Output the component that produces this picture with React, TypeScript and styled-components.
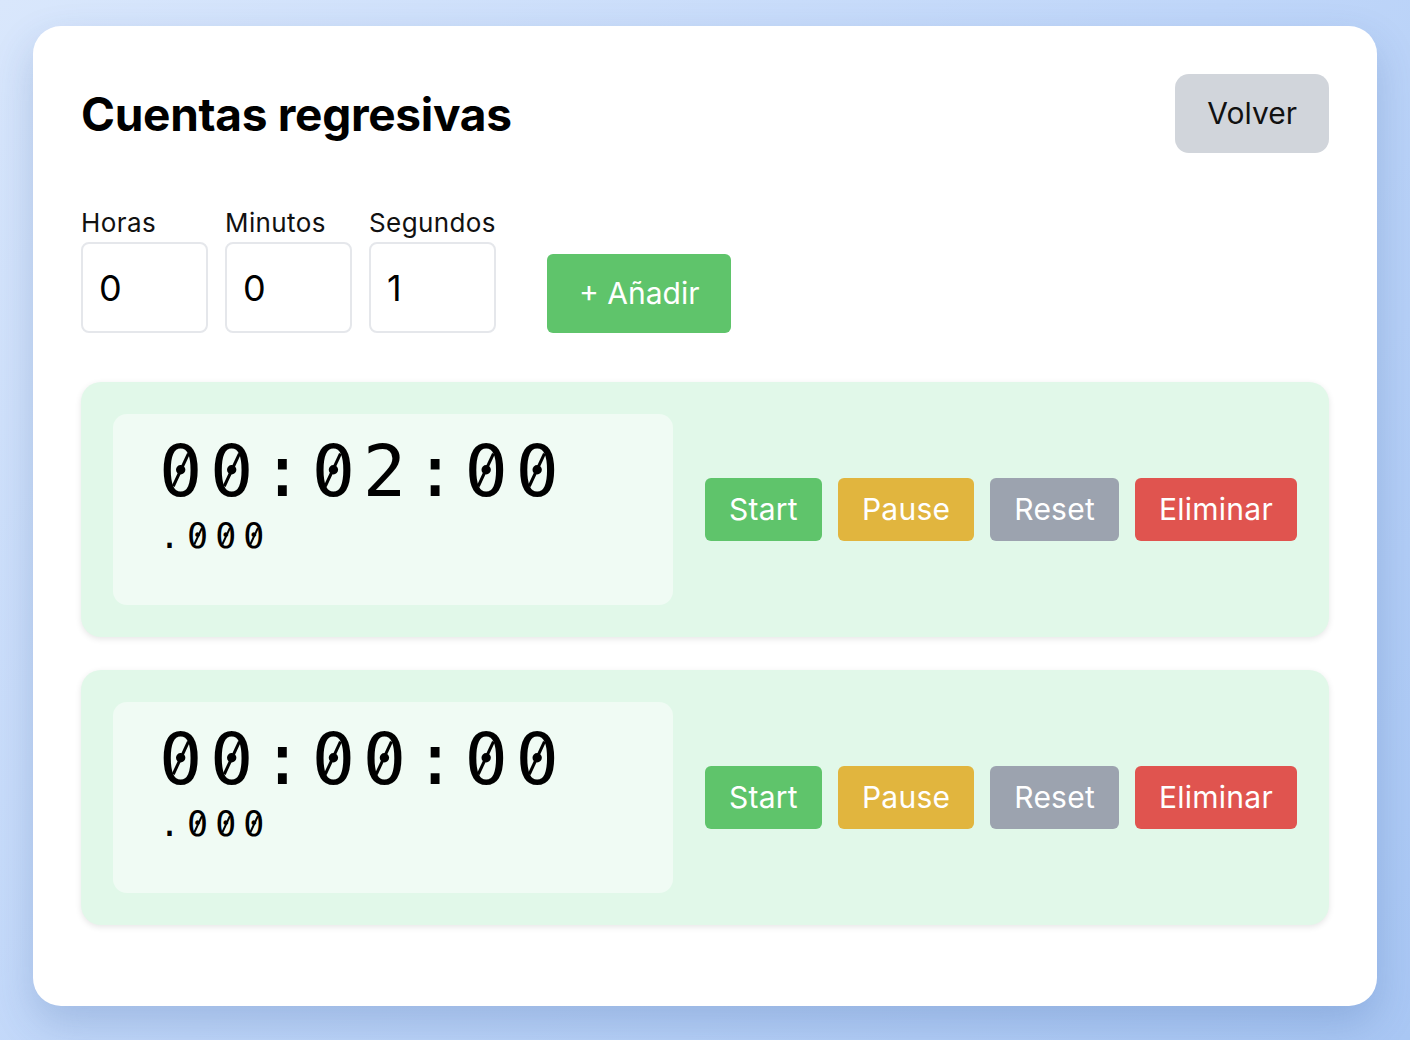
import React, { useState } from "react";
import styled, { createGlobalStyle } from "styled-components";

const GlobalStyle = createGlobalStyle`
  html, body { margin: 0; padding: 0; }
  body {
    font-family: Inter, "Noto Sans", "Liberation Sans", sans-serif;
    background: linear-gradient(135deg, #d9e7fc 0%, #bfd6f9 50%, #a9c7f4 100%);
    min-height: 100vh;
  }
  * { box-sizing: border-box; }
`;

const Page = styled.div`
  min-height: 100vh;
  padding: 26px 33px;
`;

const Card = styled.div`
  background: #ffffff;
  border-radius: 28px;
  padding: 48px 48px 81px;
  box-shadow: 0 18px 40px rgba(40, 80, 150, 0.22);
`;

const Header = styled.div`
  display: flex;
  justify-content: space-between;
  align-items: center;
`;

const Title = styled.h1`
  margin: 0;
  font-size: 46px;
  font-weight: 700;
  letter-spacing: -0.3px;
  color: #000;
`;

const Button = styled.button<{ $bg: string; $fg?: string; $big?: boolean; $radius?: number }>`
  border: none;
  cursor: pointer;
  font-family: Inter, "Noto Sans", "Liberation Sans", sans-serif;
  font-size: 30px;
  line-height: 39px;
  letter-spacing: ${(p) => (p.$big ? "0" : "0.25px")};
  padding: ${(p) => (p.$big ? "20px 32px" : "12px 24px")};
  border-radius: ${(p) => p.$radius ?? 6}px;
  background: ${(p) => p.$bg};
  color: ${(p) => p.$fg ?? "#ffffff"};
  white-space: nowrap;
`;

const Form = styled.div`
  display: flex;
  align-items: flex-end;
  gap: 17px;
  margin-top: 52px;
`;

const Field = styled.label`
  display: flex;
  flex-direction: column;
  width: 127px;
`;

const LabelText = styled.span`
  font-size: 26px;
  line-height: 35px;
  letter-spacing: 0.4px;
  margin-bottom: 2px;
  color: #111;
  white-space: nowrap;
`;

const NumberInput = styled.input`
  width: 127px;
  height: 91px;
  border: 2px solid #e5e7eb;
  border-radius: 8px;
  padding: 0 16px;
  font-family: Inter, "Noto Sans", "Liberation Sans", sans-serif;
  font-size: 36px;
  color: #000;
  outline: none;
  background: #fff;
`;

const AddWrap = styled.div`
  margin-left: 34px;
`;

const TimerList = styled.div`
  display: flex;
  flex-direction: column;
  gap: 33px;
  margin-top: 49px;
`;

const TimerCard = styled.div`
  display: flex;
  align-items: center;
  gap: 32px;
  padding: 32px;
  background: #e1f8e9;
  border-radius: 20px;
  box-shadow: 0 2px 6px rgba(0, 0, 0, 0.1);
`;

const Display = styled.div`
  flex: 1;
  min-height: 191px;
  padding: 21px 46px;
  background: #f0fbf4;
  border-radius: 14px;
  font-family: "DejaVu Sans Mono", "Liberation Mono", monospace;
  color: #000;
`;

const BigTime = styled.div`
  font-size: 72px;
  line-height: 72px;
  letter-spacing: 0.105em;
  white-space: nowrap;
`;

const SmallTime = styled.div`
  font-size: 35px;
  line-height: 35px;
  letter-spacing: 0.2em;
  margin-top: 12px;
  white-space: nowrap;
`;

/* Slashed zero, as the monospace font of the reference draws it */
const Zero = styled.span`
  position: relative;
  &::after {
    content: "";
    position: absolute;
    left: 0.301em;
    top: 0.57em;
    width: 0.046em;
    height: 0.5em;
    background: currentColor;
    transform: translate(-50%, -50%) rotate(25deg);
  }
`;

const Actions = styled.div`
  display: flex;
  gap: 16px;
`;

function MonoText({ text }: { text: string }) {
  return (
    <>
      {text.split("").map((ch, i) =>
        ch === "0" ? <Zero key={i}>0</Zero> : <React.Fragment key={i}>{ch}</React.Fragment>
      )}
    </>
  );
}

const timers = [
  { id: 1, main: "00:02:00", ms: ".000" },
  { id: 2, main: "00:00:00", ms: ".000" },
];

export default function App() {
  const [h, setH] = useState("0");
  const [m, setM] = useState("0");
  const [s, setS] = useState("1");
  return (
    <>
      <GlobalStyle />
      <Page>
        <Card>
          <Header>
            <Title>Cuentas regresivas</Title>
            <Button $bg="#d1d5db" $fg="#111" $big $radius={14}>
              Volver
            </Button>
          </Header>
          <Form>
            <Field>
              <LabelText>Horas</LabelText>
              <NumberInput type="text" value={h} onChange={(e) => setH(e.target.value)} />
            </Field>
            <Field>
              <LabelText>Minutos</LabelText>
              <NumberInput type="text" value={m} onChange={(e) => setM(e.target.value)} />
            </Field>
            <Field>
              <LabelText>Segundos</LabelText>
              <NumberInput type="text" value={s} onChange={(e) => setS(e.target.value)} />
            </Field>
            <AddWrap>
              <Button $bg="#5fc46b" $big $radius={6}>
                + Añadir
              </Button>
            </AddWrap>
          </Form>
          <TimerList>
            {timers.map((t) => (
              <TimerCard key={t.id}>
                <Display>
                  <BigTime>
                    <MonoText text={t.main} />
                  </BigTime>
                  <SmallTime>
                    <MonoText text={t.ms} />
                  </SmallTime>
                </Display>
                <Actions>
                  <Button $bg="#5fc46b">Start</Button>
                  <Button $bg="#e1b53e">Pause</Button>
                  <Button $bg="#9ca3af">Reset</Button>
                  <Button $bg="#e0544f">Eliminar</Button>
                </Actions>
              </TimerCard>
            ))}
          </TimerList>
        </Card>
      </Page>
    </>
  );
}
